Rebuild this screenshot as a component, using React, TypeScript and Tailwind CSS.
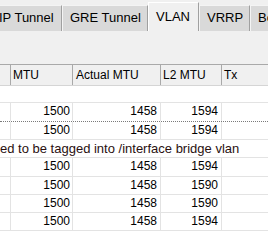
const rows = [
  { mtu: 1500, actual: 1458, l2: 1594, h: "h-[19px]", line: "border-dotted border-[#7a7a7a]" },
  { mtu: 1500, actual: 1458, l2: 1594, h: "h-[18px]", line: "border-[#e3e3e3]" },
];

const bridged = [
  { mtu: 1500, actual: 1458, l2: 1594, h: "h-[19px]" },
  { mtu: 1500, actual: 1458, l2: 1590, h: "h-[18px]" },
  { mtu: 1500, actual: 1458, l2: 1590, h: "h-[18px]" },
  { mtu: 1500, actual: 1458, l2: 1594, h: "h-[18px]" },
];

function Tab({ label, width, active }: { label: string; width: string; active?: boolean }) {
  if (active) {
    return (
      <div
        className={`${width} h-[29px] shrink-0 bg-[#f0f0f0] border-t border-l border-white border-r border-r-[#a0a0a0] pt-[6px] pl-[7px] text-[13px] leading-[16px]`}
      >
        {label}
      </div>
    );
  }
  return (
    <div
      className={`${width} h-[26px] shrink-0 bg-[#d9d9d9] border-t border-l border-[#f4f4f4] border-r border-r-[#a0a0a0] pt-[4px] pl-[7px] text-[13px] leading-[16px] whitespace-nowrap overflow-hidden`}
    >
      {label}
    </div>
  );
}

function DataRow({ mtu, actual, l2, h, line }: { mtu: number; actual: number; l2: number; h: string; line: string }) {
  return (
    <div className={`${h} flex border-b ${line} text-[12px] leading-[17px]`}>
      <div className="w-[11px] shrink-0 border-r border-[#e3e3e3]" />
      <div className="w-[62px] shrink-0 border-r border-[#e3e3e3] text-right pr-[2px]">{mtu}</div>
      <div className="w-[88px] shrink-0 border-r border-[#e3e3e3] text-right pr-[3px]">{actual}</div>
      <div className="w-[61px] shrink-0 border-r border-[#e3e3e3] text-right pr-[3px]">{l2}</div>
      <div className="flex-1" />
    </div>
  );
}

export default function App() {
  return (
    <div className="w-[268px] h-[245px] overflow-hidden bg-[#f0f0f0] flex flex-col text-black font-['Liberation_Sans',Arial,sans-serif]">
      {/* tab strip */}
      <div className="h-[31px] shrink-0 flex items-end -ml-[9px]">
        <Tab label="IP Tunnel" width="w-[71px]" />
        <Tab label="GRE Tunnel" width="w-[86px]" />
        <Tab label="VLAN" width="w-[51px]" active />
        <Tab label="VRRP" width="w-[51px]" />
        <Tab label="Bonding" width="w-[70px]" />
      </div>

      <div className="h-[33px] shrink-0" />

      {/* list header */}
      <div className="h-[22px] shrink-0 flex border-t border-[#a9a9a9] border-b border-b-[#d5d5d5] text-[12px] leading-[20px]">
        <div className="w-[11px] shrink-0 border-r border-[#a9a9a9]" />
        <div className="w-[62px] shrink-0 border-r border-[#a9a9a9] pl-[2px]">MTU</div>
        <div className="w-[88px] shrink-0 border-r border-[#a9a9a9] pl-[3px]">Actual MTU</div>
        <div className="w-[61px] shrink-0 border-r border-[#a9a9a9] pl-[2px]">L2 MTU</div>
        <div className="flex-1 pl-[2px]">Tx</div>
      </div>

      {/* list body */}
      <div className="flex-1 bg-white">
        <div className="h-[17px] border-b border-[#e3e3e3]" />
        {rows.map((r, i) => (
          <DataRow key={i} {...r} />
        ))}
        <div className="h-[18px] border-b border-[#e3e3e3] text-[13px] leading-[17px] whitespace-nowrap text-[#2a1010]">
          ed to be tagged into /interface bridge vlan
        </div>
        {bridged.map((r, i) => (
          <DataRow key={i} {...r} line="border-[#e3e3e3]" />
        ))}
      </div>
    </div>
  );
}
